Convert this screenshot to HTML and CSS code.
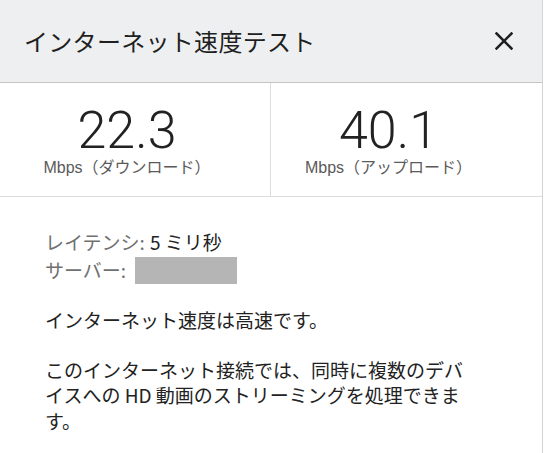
FILE: index.html
```html
<!DOCTYPE html>
<html lang="ja">
<head>
<meta charset="utf-8">
<title>インターネット速度テスト</title>
<link rel="stylesheet" href="styles.css">
</head>
<body>
<div class="modal">
  <header class="modal-header">
    <h1 class="title">インターネット速度テスト</h1>
    <button class="close" aria-label="閉じる">
      <svg width="18" height="18" viewBox="0 0 18 18"><path d="M1.5 1.5 L16.5 16.5 M16.5 1.5 L1.5 16.5" stroke="#1f1f1f" stroke-width="2.5" stroke-linecap="square" fill="none"/></svg>
    </button>
  </header>
  <section class="stats">
    <div class="stat stat-down">
      <div class="stat-value">22.3</div>
      <div class="stat-unit">Mbps（ダウンロード）</div>
    </div>
    <div class="stat stat-up">
      <div class="stat-value">40.1</div>
      <div class="stat-unit">Mbps（アップロード）</div>
    </div>
  </section>
  <section class="details">
    <div class="meta">
      <div class="meta-row"><span class="label">レイテンシ:</span> <span class="value">5 ミリ秒</span></div>
      <div class="meta-row"><span class="label">サーバー:</span> <span class="redacted"></span></div>
    </div>
    <p class="text">インターネット速度は高速です。</p>
    <p class="text">このインターネット接続では、同時に複数のデバイスへの HD 動画のストリーミングを処理できます。</p>
  </section>
</div>
</body>
</html>
```
FILE: styles.css
```css
* { box-sizing: border-box; }
html, body { margin: 0; padding: 0; background: #ffffff; }
body {
  font-family: "Noto Sans CJK JP", "Liberation Sans", sans-serif;
  color: #222222;
}
.modal {
  width: 543px;
  height: 453px;
  border-right: 1px solid #d4d4d4;
  overflow: hidden;
}
.modal-header {
  height: 83px;
  background: #eeeff1;
  border-bottom: 1px solid #c4c4c4;
  display: flex;
  align-items: center;
  justify-content: space-between;
  padding: 0 29px 0 24px;
}
.title {
  margin: 0;
  font-size: 24px;
  font-weight: 400;
  line-height: 30px;
  color: #1f1f1f;
  letter-spacing: 0.3px;
}
.close {
  border: 0;
  background: none;
  padding: 0;
  width: 18px;
  height: 18px;
  display: flex;
}
.stats {
  display: grid;
  grid-template-columns: 271px 1fr;
  border-bottom: 1px solid #dcdcdc;
}
.stat {
  display: flex;
  flex-direction: column;
  align-items: center;
  padding: 20px 0 20px;
}
.stat-down { border-right: 1px solid #dcdcdc; padding-right: 16px; }
.stat-up { padding-right: 36px; }
.stat-value {
  font-family: Roboto, "Liberation Sans", sans-serif;
  font-weight: 300;
  font-size: 52px;
  line-height: 56px;
  color: #222222;
}
.stat-unit {
  font-family: "Liberation Sans", "Noto Sans CJK JP", sans-serif;
  font-size: 16px;
  line-height: 16px;
  margin-top: 1px;
  color: #5a5a5a;
}
.details {
  padding: 31px 60px 0 45px;
}
.meta-row {
  font-size: 19px;
  line-height: 28px;
  display: flex;
  align-items: center;
}
.meta-row .label { color: #707070; }
.meta-row .value { color: #222222; margin-left: 5px; }
.redacted {
  display: inline-block;
  width: 102px;
  height: 27px;
  background: #b5b5b5;
  margin-left: 9px;
}
.text {
  font-size: 19px;
  line-height: 25.5px;
  margin: 23px 0 0;
  color: #222222;
}
.text + .text { margin-top: 24px; }
```
